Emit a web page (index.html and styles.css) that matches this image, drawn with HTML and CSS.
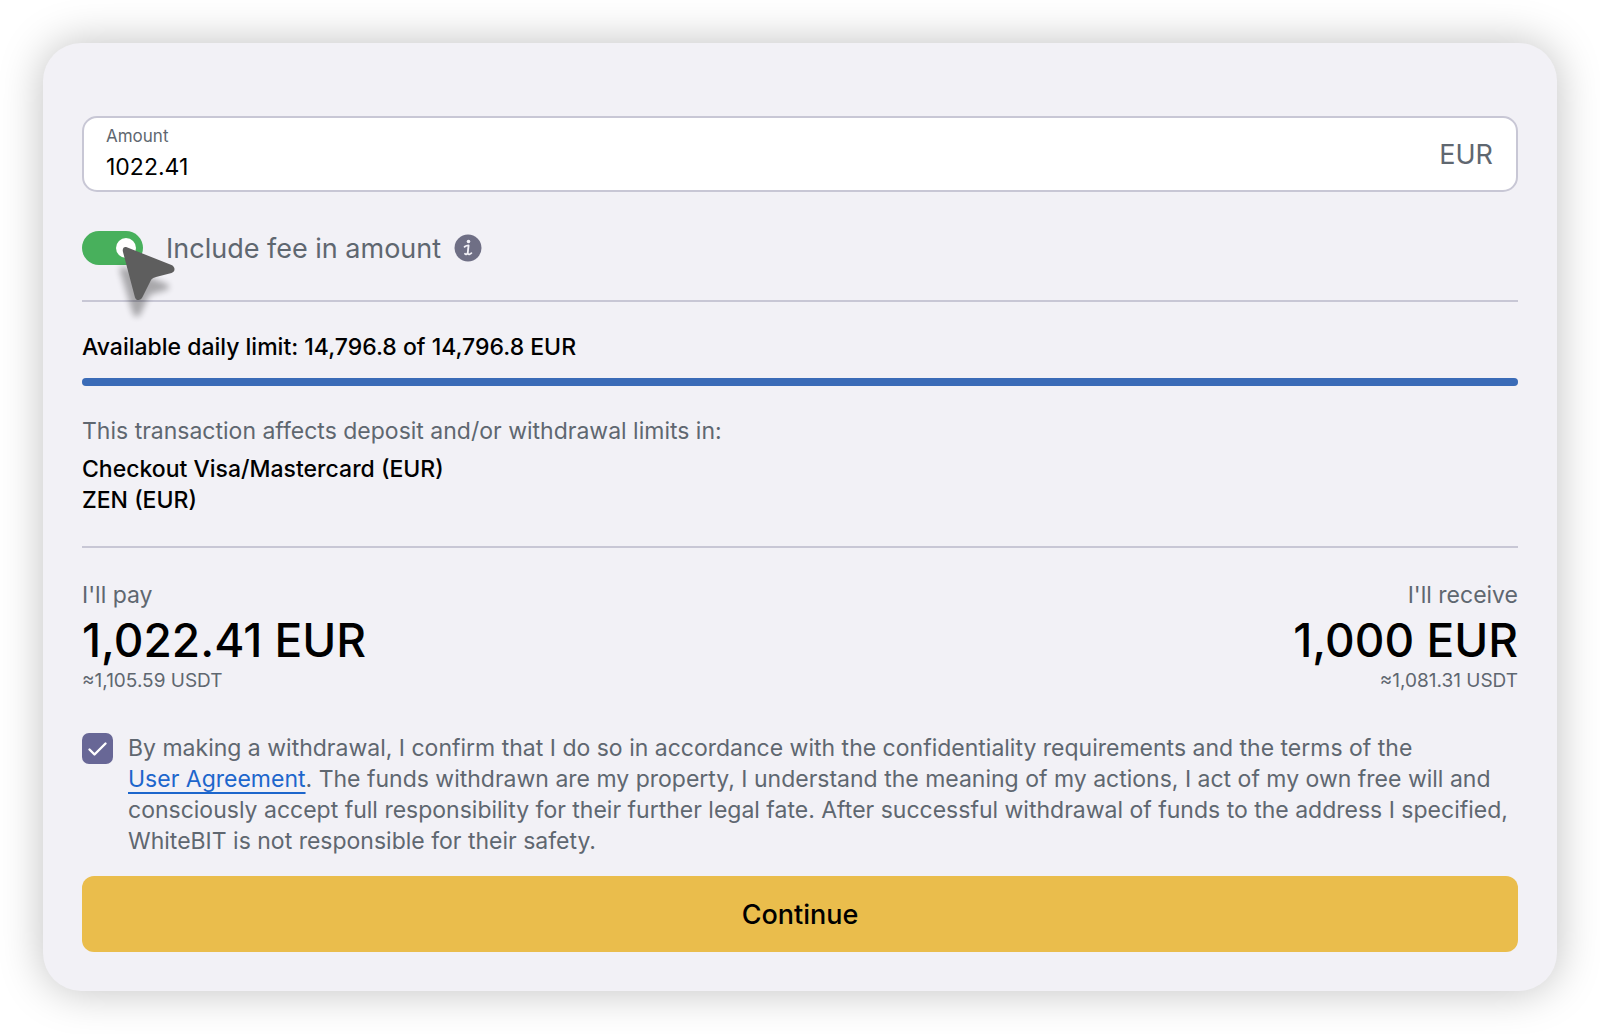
FILE: index.html
```html
<!DOCTYPE html>
<html lang="en">
<head>
<meta charset="utf-8">
<meta name="viewport" content="width=device-width, initial-scale=1">
<title>Withdraw EUR</title>
<link rel="stylesheet" href="styles.css">
</head>
<body>
<main class="card">
  <form class="form">
    <div class="field">
      <div class="field-main">
        <label class="field-label" for="amount">Amount</label>
        <input class="field-input" id="amount" type="text" inputmode="decimal" value="1022.41">
      </div>
      <span class="field-unit">EUR</span>
    </div>

    <div class="fee">
      <span class="switch-wrap">
        <input class="switch" id="fee" type="checkbox" role="switch" checked>
        <svg class="cursor" width="64" height="80" viewBox="0 0 64 80" aria-hidden="true">
          <path class="cursor-shadow" d="M11 27 L54 44 Q59 48 53 50 L39 54 Q36 55 34 60 L27 75 Q23 79 20 74 L7 31 Q6 26 11 27Z"/>
          <path class="cursor-arrow" d="M13.800 7.300 L58.500 25 C62.500 27 62.500 31.500 58.500 33 L43 37 C39.500 38 38.500 39 37 42 L29.500 57 C28 61 23 61 22 57.500 L10 12 C9 8.500 11 6.300 13.800 7.300Z"/>
        </svg>
      </span>
      <label class="fee-label" for="fee">Include fee in amount</label>
      <button class="info" type="button" aria-label="About the fee">
        <svg width="28" height="28" viewBox="0 0 28 28" aria-hidden="true">
          <circle cx="14" cy="14" r="13.500" fill="#6f6f85"/>
          <circle cx="14.500" cy="7.500" r="1.800" fill="#f2f1f7"/>
          <path d="M10.600 12.800 C11.800 11.800 13 11.400 14.600 11.400 L13.800 18.600 C13.700 20.800 15.600 20.800 17.400 19.200 M14.200 14 L13.800 18.600 C13 20.800 11.600 20.800 11 19.800" fill="none" stroke="#f2f1f7" stroke-width="1.800" stroke-linecap="round" stroke-linejoin="round"/>
        </svg>
      </button>
    </div>

    <section class="limits">
      <p class="strong" id="limit">Available daily limit: 14,796.8 of 14,796.8 EUR</p>
      <div class="bar" role="progressbar" aria-labelledby="limit" aria-valuenow="100"><div class="bar-fill" style="width: 100%"></div></div>
      <p class="muted">This transaction affects deposit and/or withdrawal limits in:</p>
      <ul class="methods strong">
        <li>Checkout Visa/Mastercard (EUR)</li>
        <li>ZEN (EUR)</li>
      </ul>
    </section>

    <section class="totals">
      <div class="total">
        <p class="muted">I'll pay</p>
        <p class="sum">1,022.41 EUR</p>
        <p class="approx">≈1,105.59 USDT</p>
      </div>
      <div class="total total-end">
        <p class="muted">I'll receive</p>
        <p class="sum">1,000 EUR</p>
        <p class="approx">≈1,081.31 USDT</p>
      </div>
    </section>

    <div class="consent">
      <span class="tick">
        <input class="tick-box" id="agree" type="checkbox" checked>
        <svg class="tick-mark" width="31" height="31" viewBox="0 0 31 31" aria-hidden="true"><path d="M7.500 16.500 L12.500 21.500 L23.500 10.500" fill="none" stroke="#fff" stroke-width="2.400" stroke-linecap="round" stroke-linejoin="round"/></svg>
      </span>
      <label class="muted" for="agree">By making a withdrawal, I confirm that I do so in accordance with the confidentiality requirements and the terms of the <br><a class="link" href="#agreement">User Agreement</a>. The funds withdrawn are my property, I understand the meaning of my actions, I act of my own free will and <br>consciously accept full responsibility for their further legal fate. After successful withdrawal of funds to the address I specified, <br>WhiteBIT is not responsible for their safety.</label>
    </div>

    <button class="submit" type="submit">Continue</button>
  </form>
</main>
</body>
</html>
```
FILE: styles.css
```css
* { box-sizing: border-box; }

body {
  margin: 0;
  padding: 43px;
  background: #fff;
  font-family: Inter, "Liberation Sans", sans-serif;
  font-size: 23px;
  line-height: 31px;
  color: #000;
}

p, ul { margin: 0; padding: 0; list-style: none; }

input, button { margin: 0; font: inherit; color: inherit; }

.card {
  padding: 73px 39px 39px;
  border-radius: 38px;
  background: #f2f1f6;
  box-shadow: 0 0 44px rgba(0, 0, 0, 0.25);
}

.form { display: flex; flex-direction: column; }

.field {
  display: flex;
  align-items: center;
  padding: 7px 23px 7px 22px;
  border: 2px solid #c8c7d5;
  border-radius: 15px;
  background: #fff;
}

.field-main { display: flex; flex: 1; flex-direction: column; gap: 4px; }

.field-label { font-size: 17px; line-height: 23px; color: #5f6770; }

.field-input {
  width: 100%;
  height: 31px;
  padding: 0;
  border: 0;
  outline: 0;
  background: none;
}

.field-unit { font-size: 27px; color: #5f6770; }

.fee {
  display: flex;
  align-items: center;
  height: 34px;
  margin: 39px 0 35px;
}

.switch-wrap { position: relative; display: flex; margin-right: 23px; }

.switch {
  display: flex;
  align-items: center;
  justify-content: flex-end;
  width: 61px;
  height: 34px;
  padding: 0 7px;
  border-radius: 17px;
  background: #48b05c;
  appearance: none;
}

.switch::before {
  content: "";
  width: 20px;
  height: 20px;
  border-radius: 50%;
  background: #fff;
}

.cursor { position: absolute; top: 9px; left: 31px; overflow: visible; pointer-events: none; }

.cursor-shadow { fill: #000; opacity: 0.3; filter: blur(3px); }

.cursor-arrow { fill: #5e5e5e; }

.fee-label { font-size: 27px; color: #5f6770; }

.info { display: flex; margin-left: 13px; padding: 0; border: 0; background: none; }

.strong { font-weight: 500; }

.muted { color: #5f6770; }

.limits {
  padding: 30px 0;
  border-top: 2px solid #c8c7d5;
  border-bottom: 2px solid #c8c7d5;
}

.bar { margin: 15px 0 30px; border-radius: 4px; background: #d8d8e2; }

.bar-fill { height: 8px; border-radius: 4px; background: #3a6bb7; }

.methods { margin-top: 7px; }

.totals { display: flex; justify-content: space-between; padding: 32px 0 40px; }

.total-end { text-align: right; }

.sum { font-size: 46px; font-weight: 500; line-height: 58px; }

.approx { font-size: 19px; line-height: 24px; color: #5f6770; }

.consent { display: flex; gap: 15px; margin-bottom: 19px; }

.tick { position: relative; display: flex; flex: none; width: 31px; height: 31px; }

.tick-box {
  width: 31px;
  height: 31px;
  border-radius: 7px;
  background: #686796;
  appearance: none;
}

.tick-mark { position: absolute; inset: 0; pointer-events: none; }

.link {
  color: #1d66cc;
  text-decoration: underline;
  text-decoration-thickness: 2px;
  text-underline-offset: 5px;
  text-decoration-skip-ink: none;
}

.submit {
  height: 76px;
  border: 0;
  border-radius: 12px;
  background: #eabd4c;
  font-size: 27px;
  font-weight: 500;
}
```
